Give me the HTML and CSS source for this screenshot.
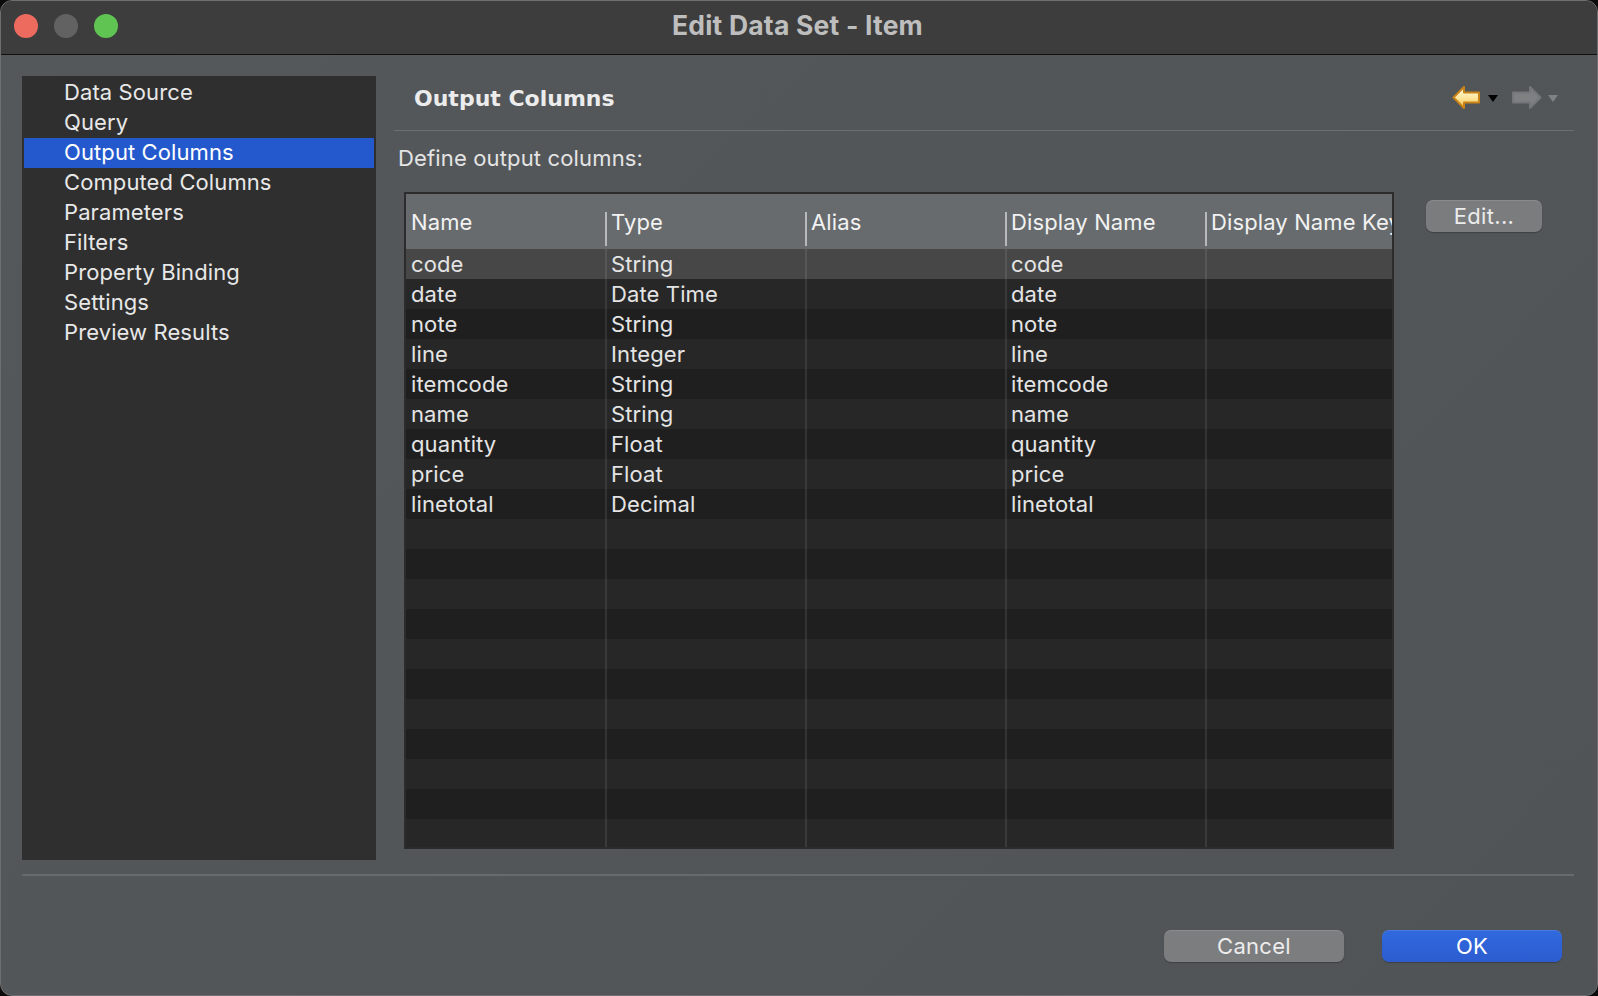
FILE: index.html
```html
<!DOCTYPE html>
<html lang="en">
<head>
<meta charset="utf-8">
<title>Edit Data Set - Item</title>
<link rel="stylesheet" href="styles.css">
</head>
<body>
<div class="window">
  <div class="titlebar">
    <div class="lights">
      <span class="light red"></span>
      <span class="light gray"></span>
      <span class="light green"></span>
    </div>
    <div class="title">Edit Data Set - Item</div>
    <div class="spacer"></div>
  </div>
  <div class="content">
    <div class="top">
      <ul class="sidebar">
        <li>Data Source</li>
        <li>Query</li>
        <li class="selected">Output Columns</li>
        <li>Computed Columns</li>
        <li>Parameters</li>
        <li>Filters</li>
        <li>Property Binding</li>
        <li>Settings</li>
        <li>Preview Results</li>
      </ul>
      <div class="panel">
        <div class="panel-header">
          <div class="panel-title">Output Columns</div>
          <svg class="nav" width="106" height="26" viewBox="0 0 106 26">
            <defs>
              <linearGradient id="gold" x1="0" y1="0" x2="0" y2="1">
                <stop offset="0" stop-color="#fffbe6"/>
                <stop offset="0.5" stop-color="#ffe7a0"/>
                <stop offset="1" stop-color="#f2c04a"/>
              </linearGradient>
            </defs>
            <path d="M1.5 12.5 L12 2 L12 7.5 L27 7.5 L27 17.5 L12 17.5 L12 23 Z" fill="url(#gold)" stroke="#c98419" stroke-width="2" stroke-linejoin="round"/>
            <path d="M36 10 L46 10 L41 17 Z" fill="#000"/>
            <path d="M88.5 12.5 L78 2 L78 7.5 L61 7.5 L61 17.5 L78 17.5 L78 23 Z" fill="#7e8082" stroke="#74777a" stroke-width="2" stroke-linejoin="round"/>
            <path d="M96 10 L106 10 L101 17 Z" fill="#7f8285"/>
          </svg>
        </div>
        <div class="label">Define output columns:</div>
        <div class="table-row">
          <div class="table">
            <div class="thead">
              <div class="th first">Name</div>
              <div class="th">Type</div>
              <div class="th">Alias</div>
              <div class="th">Display Name</div>
              <div class="th">Display Name Key</div>
            </div>
            <div class="tbody">
              <div class="tr active"><div class="td first">code</div><div class="td">String</div><div class="td"></div><div class="td">code</div><div class="td"></div></div>
              <div class="tr"><div class="td first">date</div><div class="td">Date Time</div><div class="td"></div><div class="td">date</div><div class="td"></div></div>
              <div class="tr"><div class="td first">note</div><div class="td">String</div><div class="td"></div><div class="td">note</div><div class="td"></div></div>
              <div class="tr"><div class="td first">line</div><div class="td">Integer</div><div class="td"></div><div class="td">line</div><div class="td"></div></div>
              <div class="tr"><div class="td first">itemcode</div><div class="td">String</div><div class="td"></div><div class="td">itemcode</div><div class="td"></div></div>
              <div class="tr"><div class="td first">name</div><div class="td">String</div><div class="td"></div><div class="td">name</div><div class="td"></div></div>
              <div class="tr"><div class="td first">quantity</div><div class="td">Float</div><div class="td"></div><div class="td">quantity</div><div class="td"></div></div>
              <div class="tr"><div class="td first">price</div><div class="td">Float</div><div class="td"></div><div class="td">price</div><div class="td"></div></div>
              <div class="tr"><div class="td first">linetotal</div><div class="td">Decimal</div><div class="td"></div><div class="td">linetotal</div><div class="td"></div></div>
              <div class="tr"><div class="td first"></div><div class="td"></div><div class="td"></div><div class="td"></div><div class="td"></div></div>
              <div class="tr"><div class="td first"></div><div class="td"></div><div class="td"></div><div class="td"></div><div class="td"></div></div>
              <div class="tr"><div class="td first"></div><div class="td"></div><div class="td"></div><div class="td"></div><div class="td"></div></div>
              <div class="tr"><div class="td first"></div><div class="td"></div><div class="td"></div><div class="td"></div><div class="td"></div></div>
              <div class="tr"><div class="td first"></div><div class="td"></div><div class="td"></div><div class="td"></div><div class="td"></div></div>
              <div class="tr"><div class="td first"></div><div class="td"></div><div class="td"></div><div class="td"></div><div class="td"></div></div>
              <div class="tr"><div class="td first"></div><div class="td"></div><div class="td"></div><div class="td"></div><div class="td"></div></div>
              <div class="tr"><div class="td first"></div><div class="td"></div><div class="td"></div><div class="td"></div><div class="td"></div></div>
              <div class="tr"><div class="td first"></div><div class="td"></div><div class="td"></div><div class="td"></div><div class="td"></div></div>
              <div class="tr"><div class="td first"></div><div class="td"></div><div class="td"></div><div class="td"></div><div class="td"></div></div>
              <div class="tr"><div class="td first"></div><div class="td"></div><div class="td"></div><div class="td"></div><div class="td"></div></div>
            </div>
          </div>
          <button class="btn edit">Edit...</button>
        </div>
      </div>
    </div>
    <div class="divider"></div>
    <div class="footer">
      <button class="btn cancel">Cancel</button>
      <button class="btn ok">OK</button>
    </div>
  </div>
</div>
</body>
</html>
```
FILE: styles.css
```css
* { box-sizing: border-box; }
html, body { margin: 0; padding: 0; }
body {
  background: #0c0c0c;
  width: 1598px;
  height: 996px;
  overflow: hidden;
  font-family: Inter, "Liberation Sans", sans-serif;
  color: #e6e6e6;
}
.window {
  width: 1598px;
  height: 996px;
  border-radius: 12px;
  overflow: hidden;
  background: linear-gradient(135deg, #54585b 0%, #505457 100%);
  border: 1px solid #6c6e70;
  display: flex;
  flex-direction: column;
}
.titlebar {
  height: 54px;
  flex: none;
  background: #3d3d3d;
  border-bottom: 1px solid #111;
  display: grid;
  grid-template-columns: 1fr auto 1fr;
  align-items: center;
}
.lights {
  display: flex;
  gap: 16px;
  padding-left: 13px;
  padding-bottom: 3px;
}
.light {
  width: 24px;
  height: 24px;
  border-radius: 50%;
  display: block;
}
.light.red { background: #ed6a5e; }
.light.gray { background: #626262; }
.light.green { background: #5fc452; }
.title {
  text-align: center;
  font-weight: 700;
  font-size: 26.5px;
  letter-spacing: 0.2px;
  color: #bebebe;
  padding-bottom: 5px;
  margin-right: 3px;
}
.content {
  flex: 1;
  display: flex;
  flex-direction: column;
  padding: 21px 23px 0 21px;
}
.top {
  display: flex;
  gap: 18px;
  height: 784px;
}
.sidebar {
  list-style: none;
  margin: 0;
  width: 354px;
  flex: none;
  background: #2f2f2f;
  padding: 2px;
  font-size: 22px;
  letter-spacing: 0.1px;
}
.sidebar li {
  height: 30px;
  line-height: 28px;
  padding-bottom: 2px;
  padding-left: 40px;
  color: #e8e8e8;
}
.sidebar li.selected {
  background: #2459cd;
  color: #fff;
}
.panel {
  flex: 1;
  display: flex;
  flex-direction: column;
}
.panel-header {
  height: 55px;
  border-bottom: 1px solid #6b6f72;
  display: flex;
  align-items: center;
  justify-content: space-between;
  padding: 0 16px 10px 20px;
}
.panel-title {
  font-family: "DejaVu Sans", sans-serif;
  font-weight: 700;
  font-size: 22px;
  color: #ececec;
}
.label {
  margin-top: 15px;
  padding-left: 4px;
  font-size: 22px;
  letter-spacing: 0.15px;
  line-height: 24px;
  padding-bottom: 2px;
  color: #e4e4e4;
}
.table-row {
  display: flex;
  align-items: flex-start;
  margin-top: 20px;
  padding-left: 10px;
}
.table {
  width: 990px;
  height: 657px;
  border: 2px solid #2c2c2c;
  background: #1f1f1f;
  overflow: hidden;
  font-size: 22px;
  letter-spacing: 0.12px;
}
.thead, .tr {
  display: grid;
  grid-template-columns: 199px 200px 200px 200px 1fr;
}
.thead {
  height: 55px;
  background: #676b6e;
  align-items: end;
  padding-bottom: 3px;
}
.th {
  height: 34px;
  border-left: 2px solid #b8b9ba;
  padding-left: 4px;
  color: #f2f2f2;
  white-space: nowrap;
  line-height: 20px;
}
.th.first {
  border-left: none;
  padding-left: 5px;
}
.tbody {
  height: 598px;
  overflow: hidden;
}
.tr {
  height: 30px;
  background: #1f1f1f;
}
.tr:nth-child(even) { background: #272727; }
.tr.active { background: #474747; }
.td {
  border-left: 2px solid rgba(255, 255, 255, 0.09);
  padding-left: 4px;
  line-height: 30px;
  white-space: nowrap;
  overflow: hidden;
  color: #e4e4e4;
}
.td.first {
  border-left: none;
  padding-left: 5px;
}
.btn {
  font-family: Inter, "Liberation Sans", sans-serif;
  font-size: 22px;
  letter-spacing: 0.3px;
  color: #ececec;
  border: none;
  border-radius: 7px;
  height: 32px;
  padding: 0;
  box-shadow: inset 0 1px 0 rgba(255,255,255,0.12), 0 1px 1px rgba(0,0,0,0.25);
}
.edit {
  width: 116px;
  margin-left: 32px;
  margin-top: 8px;
  background: #7a7c7e;
}
.divider {
  margin-top: 14px;
  height: 2px;
  background: #676b6e;
}
.footer {
  display: flex;
  justify-content: flex-end;
  gap: 38px;
  padding: 54px 12px 0 0;
}
.cancel {
  width: 180px;
  background: #7c7d7f;
}
.ok {
  width: 180px;
  background: linear-gradient(#3169de, #2c5cd0);
  color: #fff;
}
```
